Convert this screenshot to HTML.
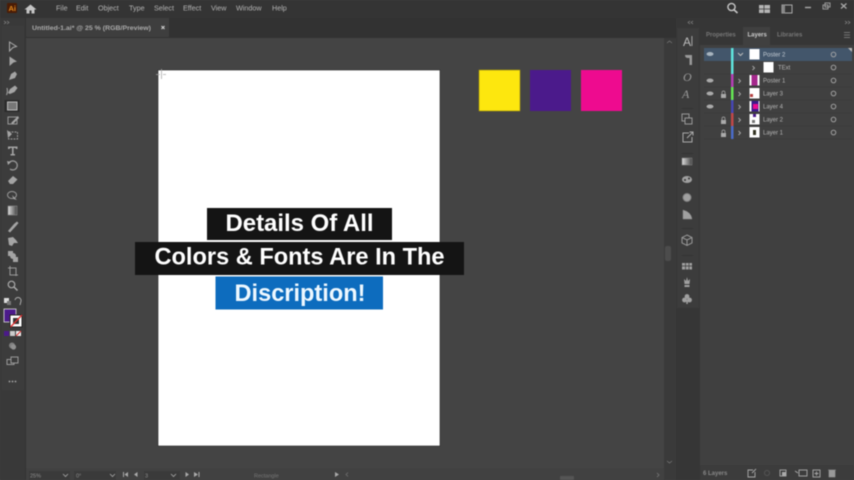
<!DOCTYPE html>
<html><head><meta charset="utf-8"><style>
html,body{margin:0;padding:0;background:#444;width:854px;height:480px;overflow:hidden}
svg{display:block;position:absolute;left:0;top:0;filter:blur(.5px)}
text{font-family:"Liberation Sans",sans-serif}
</style></head><body>
<svg width="854" height="480" viewBox="0 0 854 480" xmlns="http://www.w3.org/2000/svg">
<rect width="854" height="480" fill="#444"/>
<!-- top bars -->
<rect width="854" height="18" fill="#343434"/>
<rect y="18" width="854" height="20" fill="#323232"/>
<rect x="26" y="18" width="143" height="19" fill="#3e3e3e"/>
<rect x="0" y="18" width="26" height="462" fill="#393939"/>
<rect x="25" y="18" width="1" height="462" fill="#333"/>
<rect x="2" y="26" width="22" height="364" fill="#3c3c3c"/>
<!-- right -->
<rect x="664" y="38" width="12" height="442" fill="#3a3a3a"/>
<rect x="665" y="246" width="6" height="15" rx="2" fill="#4c4c4c"/>
<rect x="676" y="18" width="178" height="462" fill="#363636"/>
<rect x="677" y="28" width="22" height="280" fill="#3c3c3c"/>
<rect x="700" y="45" width="154" height="420" fill="#404040"/>
<rect x="702" y="28" width="152" height="17" fill="#363636"/>
<rect x="743" y="27" width="27" height="18" fill="#404040"/>
<rect x="700" y="465" width="154" height="15" fill="#3c3c3c"/>
<!-- bottom bar -->
<rect x="26" y="468" width="638" height="12" fill="#414141"/>
<rect x="29" y="471" width="41" height="9" fill="#3a3a3a"/>
<rect x="74" y="471" width="42" height="9" fill="#3a3a3a"/>
<rect x="144" y="471" width="36" height="9" fill="#3a3a3a"/>
<rect x="560" y="476" width="14" height="4" rx="1" fill="#555"/>

<!-- AI logo -->
<rect x="7" y="3" width="10" height="10" rx="1" fill="#4a1c05"/>
<text x="8.5" y="11" font-size="7.5" font-weight="700" fill="#e08a20">Ai</text>
<path d="M24.500 9.500L30.500 4.500L36.500 9.500H34.500V13.500H31.500V10.500H29.500V13.500H26.500V9.500Z" fill="#c4c4c4"/>
<g font-size="7.200" fill="#b4b4b4">
<text x="56" y="10.500">File</text><text x="76" y="10.500">Edit</text><text x="98" y="10.500">Object</text><text x="129" y="10.500">Type</text><text x="154" y="10.500">Select</text><text x="183" y="10.500">Effect</text><text x="211" y="10.500">View</text><text x="236" y="10.500">Window</text><text x="272" y="10.500">Help</text>
</g>
<text x="32" y="30" font-size="6.600" font-weight="700" fill="#aaa" textLength="119" lengthAdjust="spacingAndGlyphs">Untitled-1.ai* @ 25 % (RGB/Preview)</text>
<path d="M161.500 26L164.500 29M164.500 26L161.500 29" stroke="#ccc" stroke-width="1.200"/>

<!-- top right icons -->
<circle cx="731.500" cy="7" r="3.600" fill="none" stroke="#c8c8c8" stroke-width="1.400"/>
<path d="M734 9.800L737.500 13" stroke="#c8c8c8" stroke-width="1.600"/>
<rect x="759" y="5" width="11" height="8" fill="#b5b5b5"/><path d="M764 5V13M759 9H770" stroke="#3a3a3a" stroke-width=".8"/>
<rect x="782" y="5" width="10" height="8" fill="none" stroke="#aaa" stroke-width="1"/><rect x="782" y="5" width="3" height="8" fill="#888"/>
<path d="M805 7.500H811" stroke="#aaa" stroke-width="1.400"/>
<rect x="823" y="5" width="5" height="4" fill="none" stroke="#999"/><rect x="825" y="3" width="5" height="4" fill="none" stroke="#999"/>
<path d="M841 3.500L846.500 8.500M846.500 3.500L841 8.500" stroke="#aaa" stroke-width="1.200"/>

<!-- artboard -->
<rect x="158" y="70" width="282" height="376" fill="#fff" stroke="#222" stroke-width=".6"/>
<path d="M161.500 69V79M156 74.500H160M163 74.500H166" stroke="#aaa" stroke-width=".8"/>
<rect x="207" y="208" width="185" height="32" fill="#141414"/>
<rect x="135" y="242" width="329" height="33" fill="#141414"/>
<rect x="215.500" y="276.500" width="167.500" height="33" fill="#0d6cbe"/>
<g font-weight="700" fill="#fff" font-size="24">
<text x="225.500" y="231" textLength="148" lengthAdjust="spacingAndGlyphs">Details Of All</text>
<text x="154.500" y="264.500" textLength="290" lengthAdjust="spacingAndGlyphs">Colors &amp; Fonts Are In The</text>
<text x="234.500" y="301" textLength="131" lengthAdjust="spacingAndGlyphs" fill="#eef8ff">Discription!</text>
</g>
<!-- swatches -->
<rect x="479" y="70" width="41" height="41" fill="#fde70e" stroke="#9a8c10" stroke-width=".6"/>
<rect x="530" y="70" width="41" height="41" fill="#4b1a8b"/>
<rect x="581" y="70" width="41" height="41" fill="#ee0b8f"/>

<!-- tools -->
<g fill="#a4a4a4" stroke="none">
<path d="M9.500 42L16.500 46.500L13 47.500L9.500 51Z" fill="none" stroke="#aaa" stroke-width="1"/>
<path d="M9.500 56.500L17 61.500L13.500 62.500L9.500 66Z"/>
<path d="M9 80L11 74L15 71.500L17 74L15 78Z"/>
<path d="M8 93L10 89L15 85.500L17.500 88L14.500 92L10 94Z"/><path d="M7 88Q8 92 6.500 95" fill="none" stroke="#aaa"/>
<rect x="4.500" y="100" width="15" height="12" fill="#2b2b2b"/><rect x="7.500" y="102" width="9.500" height="8" fill="#777" stroke="#bbb" stroke-width="1"/>
<rect x="8" y="117" width="9" height="7" fill="none" stroke="#999"/><path d="M11 123L18 116L19 118L13 124Z"/>
<rect x="8.500" y="132" width="9" height="7" fill="none" stroke="#999" stroke-dasharray="2 1"/><path d="M7 130L12 134L8 138Z"/>
<path d="M8 146.500H17.500V149H16L15.500 148H13.600V154H15V155.500H10.500V154H12V148H10L9.500 149H8Z"/>
<path d="M9 163A4.500 4.500 0 1 1 10 169" fill="none" stroke="#999" stroke-width="1.300"/><path d="M7 161L11 162L8 165Z"/>
<path d="M8 181L13 176L17.500 179.500L13 184H10Z"/>
<ellipse cx="12" cy="195" rx="4.500" ry="3.500" fill="none" stroke="#999"/><path d="M12 195L17 200L13.500 199Z"/>
</g>
<defs><linearGradient id="g"><stop offset="0" stop-color="#333"/><stop offset="1" stop-color="#ddd"/></linearGradient>
<linearGradient id="g2"><stop offset="0" stop-color="#ddd"/><stop offset="1" stop-color="#444"/></linearGradient></defs>
<rect x="8" y="206" width="9" height="9" fill="url(#g2)" stroke="#888" stroke-width=".6"/>
<g fill="#a4a4a4">
<path d="M8 231L14 224L17 221.500L18.500 223L16 226L10 232.500Z"/>
<path d="M8 238L13 237L16 240L18 243L14 243L12 246L9 245Z"/>
<rect x="8" y="251" width="5" height="5"/><circle cx="13" cy="256" r="3"/><rect x="13" y="257" width="5" height="5"/>
<path d="M10 266V275H18M8 268H16V276" fill="none" stroke="#999"/>
<circle cx="11.500" cy="284.500" r="3.300" fill="none" stroke="#aaa" stroke-width="1.200"/><path d="M14 287L17.500 290.500" stroke="#aaa" stroke-width="1.500"/>
<rect x="4" y="298" width="5" height="5" fill="#ddd"/><rect x="7" y="301" width="4" height="4" fill="#777"/>
<path d="M15 300A3 3 0 0 1 21 301L20 305" fill="none" stroke="#aaa"/>
</g>
<!-- fill/stroke -->
<rect x="4" y="309" width="12" height="13" fill="#4b1a8b" stroke="#ddd" stroke-width=".8"/>
<rect x="10" y="315" width="12" height="12" fill="#fff" stroke="#222"/>
<rect x="13" y="318" width="6" height="6" fill="#333"/>
<path d="M10.500 327L22 315" stroke="#e03030" stroke-width="1.300"/>
<rect x="4" y="331" width="5" height="5" fill="#4b1a8b"/><rect x="10" y="331" width="5" height="5" fill="#ccc"/><rect x="16" y="331" width="5" height="5" fill="#eee"/><path d="M16 336L21 331" stroke="#e03030"/>
<circle cx="12" cy="345.500" r="3" fill="#808080"/><circle cx="13.500" cy="347" r="2.600" fill="#909090"/>
<rect x="7" y="359.500" width="7" height="5" fill="none" stroke="#999"/><rect x="11" y="357" width="7" height="6" fill="#3b3b3b" stroke="#999"/>
<g fill="#aaa"><circle cx="9.500" cy="381.500" r=".9"/><circle cx="12.500" cy="381.500" r=".9"/><circle cx="15.500" cy="381.500" r=".9"/></g>

<!-- dock icons -->
<text x="683" y="46" font-size="12" fill="#bbb">A</text><rect x="691.500" y="36" width=".8" height="10" fill="#bbb"/>
<path d="M685 55H692V65H689.500V58H688Q685 58 685 55Z" fill="#999"/>
<text x="683" y="81" font-size="12" font-style="italic" style="font-family:'Liberation Serif'" fill="#999">O</text>
<text x="682" y="98" font-size="12" font-style="italic" style="font-family:'Liberation Serif'" fill="#999">A</text>
<rect x="682" y="114" width="7" height="7" fill="none" stroke="#999"/><rect x="685" y="118" width="7" height="6" fill="#3c3c3c" stroke="#999"/>
<path d="M689 133H683V142H692V137M687 138L693 132M689.500 132H693V135.500" fill="none" stroke="#aaa"/>
<rect x="682" y="158" width="10" height="7" fill="url(#g2)" stroke="#888" stroke-width=".5"/>
<ellipse cx="687" cy="179.500" rx="5" ry="3.500" fill="#a0a0a0"/><circle cx="685" cy="180" r="1" fill="#333"/><circle cx="689" cy="178.500" r="1" fill="#333"/>
<circle cx="687" cy="197.500" r="4" fill="#a0a0a0" stroke="#808080"/>
<path d="M683 210V219H692Q691 212 683 210Z" fill="#a0a0a0" stroke="#888" stroke-width=".5"/>
<path d="M687 235L692 237.500V243L687 245.500L682 243V237.500ZM682 237.500L687 240L692 237.500M687 240V245.500" fill="none" stroke="#999"/>
<rect x="682" y="263" width="10" height="6.500" fill="#a0a0a0"/><path d="M685.500 263V270M689 263V270M682 266H692" stroke="#3a3a3a" stroke-width=".7"/>
<path d="M684 279L686 281L687 277L688 281L690 279L689.500 284H684.500ZM684.500 285H689.500V287H684.500Z" fill="#a0a0a0"/>
<circle cx="687" cy="296.500" r="2.400" fill="#a0a0a0"/><circle cx="684.500" cy="300" r="2.400" fill="#a0a0a0"/><circle cx="689.500" cy="300" r="2.400" fill="#a0a0a0"/><rect x="686.300" y="300" width="1.500" height="4" fill="#a0a0a0"/>
<path d="M682 108.500H693M682 153.500H693M682 228.500H693M682 255.500H693" stroke="#323232" stroke-width=".8"/>

<!-- panel tabs -->
<g font-size="6" font-weight="700">
<text x="706" y="36.500" fill="#777">Properties</text>
<text x="747.500" y="36.500" fill="#ccc">Layers</text>
<text x="777" y="36.500" fill="#777">Libraries</text>
</g>
<path d="M844 32.500H850M844 35H850M844 37.500H850" stroke="#888" stroke-width=".8"/>

<!-- layers -->
<rect x="704" y="48" width="148" height="13" fill="#43566b"/>
<path d="M848 48H852V52Z" fill="#bbb"/>
<path d="M704 74H852M704 87H852M704 100H852M704 113H852M704 126H852M704 139H852" stroke="#383838" stroke-width=".5"/>
<rect x="731" y="48" width="2.500" height="13" fill="#5fe3dc"/>
<rect x="731" y="61" width="2.500" height="13" fill="#5fe3dc"/>
<rect x="731" y="74" width="2.500" height="13" fill="#b43fb4"/>
<rect x="731" y="87" width="2.500" height="13" fill="#66e655"/>
<rect x="731" y="100" width="2.500" height="13" fill="#4646b4"/>
<rect x="731" y="113" width="2.500" height="13" fill="#c04848"/>
<rect x="731" y="126" width="2.500" height="13" fill="#4a6cc8"/>
<g fill="#a8b4bf"><ellipse cx="710" cy="54" rx="3.500" ry="2"/><ellipse cx="710" cy="80.500" rx="3.500" ry="2" fill="#aaa"/><ellipse cx="710" cy="93.500" rx="3.500" ry="2" fill="#aaa"/><ellipse cx="710" cy="106.500" rx="3.500" ry="2" fill="#aaa"/></g>
<g fill="#aaa"><rect x="721" y="94" width="5" height="4"/><rect x="721" y="120" width="5" height="4"/><rect x="721" y="133" width="5" height="4"/></g>
<path d="M722 94V92.500A1.500 1.500 0 0 1 725 92.500V94M722 120V118.500A1.500 1.500 0 0 1 725 118.500V120M722 133V131.500A1.500 1.500 0 0 1 725 131.500V133" fill="none" stroke="#aaa" stroke-width=".7"/>
<path d="M738 53L740.500 55.500L743 53" fill="none" stroke="#bbb"/>
<path d="M752.500 66L754.500 68L752.500 70M738.500 79L740.500 81L738.500 83M738.500 92L740.500 94L738.500 96M738.500 105L740.500 107L738.500 109M738.500 118L740.500 120L738.500 122M738.500 131L740.500 133L738.500 135" fill="none" stroke="#aaa" stroke-width=".9"/>
<rect x="749.500" y="49" width="10" height="10.500" fill="#fff"/>
<rect x="763.500" y="62" width="10" height="10.500" fill="#fff"/>
<rect x="749.500" y="75" width="10" height="10.500" fill="#fff"/><rect x="751.500" y="75" width="6" height="10.500" fill="#a5288c"/>
<rect x="749.500" y="88" width="10" height="10.500" fill="#fff"/><rect x="750" y="94" width="3" height="3" fill="#b54040"/>
<rect x="749.500" y="101" width="10" height="10.500" fill="#fff"/><rect x="751.500" y="101" width="7" height="10.500" fill="#3c1a8b"/><rect x="753" y="104" width="5" height="5" fill="#ee0b8f"/>
<rect x="749.500" y="114" width="10" height="10.500" fill="#fff"/><rect x="753" y="114" width="3" height="3" fill="#4b1a8b"/><rect x="752" y="120" width="3" height="3" fill="#777"/>
<rect x="749.500" y="127" width="10" height="10.500" fill="#fff"/><rect x="753" y="130" width="3" height="5" fill="#332"/>
<g font-size="6" fill="#b5b5b5">
<text x="763" y="56.500" fill="#c4ccd4">Poster 2</text>
<text x="778" y="69.500">TExt</text>
<text x="763" y="82.500">Poster 1</text>
<text x="763" y="95.500">Layer 3</text>
<text x="763" y="108.500">Layer 4</text>
<text x="763" y="121.500">Layer 2</text>
<text x="763" y="134.500">Layer 1</text>
</g>
<g fill="none" stroke="#aaa" stroke-width=".9">
<circle cx="833.500" cy="54.500" r="2.300"/><circle cx="833.500" cy="67.500" r="2.300"/><circle cx="833.500" cy="80.500" r="2.300"/><circle cx="833.500" cy="93.500" r="2.300"/><circle cx="833.500" cy="106.500" r="2.300"/><circle cx="833.500" cy="119.500" r="2.300"/><circle cx="833.500" cy="132.500" r="2.300"/>
</g>
<!-- collapse arrows -->
<path d="M690 21L688 22.500L690 24M693 21L691 22.500L693 24M845 21L847 22.500L845 24M848 21L850 22.500L848 24M4 21L6 22.500L4 24M7 21L9 22.500L7 24" fill="none" stroke="#888" stroke-width=".7"/>
<path d="M667 43L669.500 41L672 43M667 461L669.500 463L672 461M657 473L659 475L657 477" fill="none" stroke="#777" stroke-width=".8"/>

<!-- status bar -->
<g font-size="5.500" fill="#8f8f8f">
<text x="30" y="477.500">25%</text><text x="76" y="477.500">0°</text><text x="145" y="477.500">3</text><text x="254" y="477.500" fill="#777">Rectangle</text>
</g>
<path d="M63 474L65.500 476.500L68 474M110 474L112.500 476.500L115 474M171 474L173.500 476.500L176 474" fill="none" stroke="#aaa" stroke-width=".8"/>
<g fill="#aaa">
<path d="M123 472H124V477H123ZM128 472V477L124.500 474.500Z"/>
<path d="M137.500 472V477L134 474.500Z"/>
<path d="M185.500 472V477L189 474.500Z"/>
<path d="M194 472V477L198 474.500ZM198.500 472H199.500V477H198.500Z"/>
<path d="M335 472V477L339 474.500Z"/>
</g>
<path d="M348 472.500L346 474.500L348 476.500" fill="none" stroke="#666"/>
<text x="703" y="475" font-size="6" font-weight="700" fill="#888">6 Layers</text>
<g fill="none" stroke="#aaa" stroke-width=".9">
<path d="M753 470H748V477H755V472M752 473L756 469"/>
<rect x="780" y="470" width="6" height="6"/>
<rect x="799" y="470" width="8" height="6"/>
<rect x="813" y="470" width="7" height="7"/><path d="M816.500 471.500V475.500M814.500 473.500H818.500"/>
</g>
<circle cx="767" cy="473" r="2.500" fill="none" stroke="#555"/>
<rect x="782" y="472" width="4" height="4" fill="#aaa"/>
<path d="M795 471L798 473" stroke="#aaa"/>
<path d="M829 470.500H835V477H829ZM828 470H836" fill="#999" stroke="#999" stroke-width=".6"/>
</svg>
</body></html>
